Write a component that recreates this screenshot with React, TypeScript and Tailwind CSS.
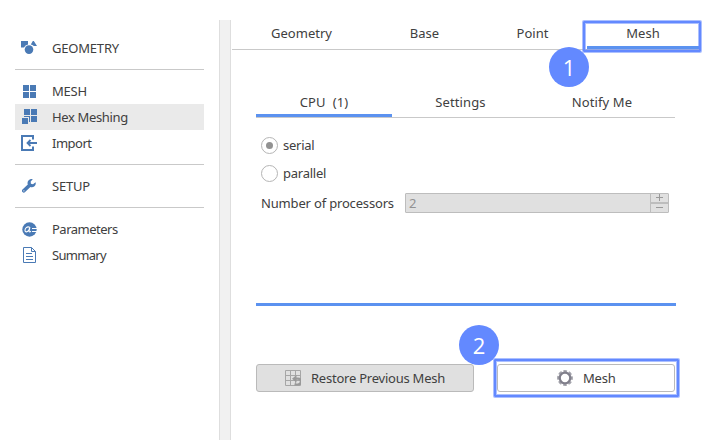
import React from "react";

const BLUE = "#4a7ab5";

function GeometryIcon() {
  return (
    <svg width="16" height="14" viewBox="0 0 16 14" fill={BLUE}>
      <path d="M0 0h7v3.500A5.200 5.200 0 0 0 3 6.500H0z" />
      <path d="M12.300-.8L16 5h-3.200A5.500 5.500 0 0 0 9.800 3.400z" />
      <circle cx="8" cy="8.600" r="4.300" />
    </svg>
  );
}

function MeshIcon() {
  return (
    <svg width="13" height="13" viewBox="0 0 13 13" fill={BLUE}>
      <path d="M0 0h6v6H0zM7 0h6v6H7zM0 7h6v6H0zM7 7h6v6H7z" />
    </svg>
  );
}

function HexIcon() {
  return (
    <svg width="16" height="16" viewBox="0 0 16 16" fill={BLUE}>
      <path d="M3 0h6v6H3zM10 0h6v6h-6zM10 7h6v6h-6zM1 9h6v6H1zM3 7h6v6H8V8H3z" />
    </svg>
  );
}

function ImportIcon() {
  return (
    <svg width="16" height="16" viewBox="0 0 16 16" fill="none" stroke={BLUE} strokeWidth="2">
      <path d="M12 4.500V1H1v14h11v-3.500" />
      <path d="M16 8H7" />
      <path d="M9.500 5L6.500 8L9.500 11" strokeWidth="1.800" />
    </svg>
  );
}

function WrenchIcon() {
  return (
    <svg width="14" height="14" viewBox="0 0 14 14">
      <path
        d="M10.800.2a4 4 0 0 0-5 5.200L.5 10.500a1.750 1.750 0 0 0 2.600 2.600l5.300-5a4 4 0 0 0 5.200-4.800L11 5.200 8.900 4.800 8.700 2.600z"
        fill={BLUE}
      />
      <circle cx="1.900" cy="11.800" r=".6" fill="#fff" />
    </svg>
  );
}

function ParametersIcon() {
  return (
    <svg width="15" height="15" viewBox="0 0 15 15">
      <circle cx="7.500" cy="7.500" r="7.200" fill={BLUE} />
      <path
        d="M7.700 5.200C4.800 4 3 6.500 3 8.300c0 2.300 2.700 2 4-.6l.9-2.500-.8 3.700c-.1 1.400.9 1.300 1.800.3"
        fill="none"
        stroke="#fff"
        strokeWidth="1.100"
      />
      <path d="M10 6.500h5M10 9.500h5" stroke="#fff" />
    </svg>
  );
}

function SummaryIcon() {
  return (
    <svg width="13" height="16" viewBox="0 0 13 16" fill="none" stroke={BLUE}>
      <path d="M.5.5h8l4 4v11H.5zM8.500.5v4h4M3 6.500h6M3 9.500h7M3 12.500h7" />
    </svg>
  );
}

function RestoreIcon() {
  return (
    <svg width="16" height="16" viewBox="0 0 16 16" fill="none">
      <path d="M.5.5h15v15H.5zM5.500 0v16M10.500 0v16M0 5.500h16M0 10.500h16" stroke="#a6a6a6" />
      <path d="M10.500 8.700H13a2.500 2.500 0 0 1 0 5.800h-3.500" stroke="#999" strokeWidth="2.200" />
      <path d="M11.500 5v7.500L7 8.700z" fill="#999" />
    </svg>
  );
}

function GearIcon() {
  return (
    <svg width="16" height="16" viewBox="0 0 16 16" fill="none">
      <circle cx="8" cy="8" r="6.900" stroke="#a3a3ab" strokeWidth="2" strokeDasharray="3.600 1.819" strokeDashoffset="1.800" />
      <circle cx="8" cy="8" r="5.300" stroke="#807f8b" strokeWidth="2.300" />
    </svg>
  );
}

function NavItem({
  icon,
  label,
  spacing,
  active = false,
}: {
  icon: React.ReactNode;
  label: string;
  spacing: string;
  active?: boolean;
}) {
  return (
    <div className={`flex h-[26px] items-center ${active ? "bg-[#eaeaea]" : ""}`}>
      <span className="flex w-[28px] justify-center">{icon}</span>
      <span className={`ml-[9px] ${spacing}`}>{label}</span>
    </div>
  );
}

function Divider() {
  return <div className="my-2 h-px bg-[#c9c9c9]" />;
}

function Tab({ label, width, active = false }: { label: string; width: string; active?: boolean }) {
  return (
    <div className={`flex flex-col ${width}`}>
      <span className="flex flex-1 items-center justify-center whitespace-pre">{label}</span>
      <span className={`h-[3px] ${active ? "bg-[#5b92f0]" : ""}`} />
    </div>
  );
}

function Step({ n, place }: { n: number; place: string }) {
  return (
    <div
      className={`absolute flex size-10 items-center justify-center rounded-full bg-[#6389ff] pb-px font-['Open_Sans','Noto_Sans',sans-serif] text-[22px] text-white ${place}`}
    >
      {n}
    </div>
  );
}

function Highlight({ place }: { place: string }) {
  return (
    <div
      className={`pointer-events-none absolute rounded-[1px] border-2 border-[#6389ff] shadow-[0_0_0_1px_#6389ff88,inset_0_0_0_1px_#6389ff88] ${place}`}
    />
  );
}

function Radio({ label, checked = false }: { label: string; checked?: boolean }) {
  return (
    <div className="flex h-7 items-center gap-[5px]">
      <span className="flex size-[17px] items-center justify-center rounded-full border border-[#b5b5b5]">
        {checked && <span className="size-[7px] rounded-full bg-[#929292]" />}
      </span>
      <span className="tracking-[-0.25px]">{label}</span>
    </div>
  );
}

export default function App() {
  return (
    <div className="relative flex h-[440px] w-[721px] overflow-hidden bg-white font-['Noto_Sans',sans-serif] text-[13px] leading-[18px] text-[#404040]">
      <nav className="ml-[15px] w-[189px] pt-[35px]">
        <NavItem icon={<GeometryIcon />} label="GEOMETRY" spacing="tracking-[-0.2px]" />
        <Divider />
        <NavItem icon={<MeshIcon />} label="MESH" spacing="tracking-[-0.2px]" />
        <NavItem icon={<HexIcon />} label="Hex Meshing" spacing="tracking-[-0.36px]" active />
        <NavItem icon={<ImportIcon />} label="Import" spacing="tracking-[-0.5px]" />
        <Divider />
        <NavItem icon={<WrenchIcon />} label="SETUP" spacing="tracking-[-0.2px]" />
        <Divider />
        <NavItem icon={<ParametersIcon />} label="Parameters" spacing="tracking-[-0.5px]" />
        <NavItem icon={<SummaryIcon />} label="Summary" spacing="tracking-[-0.7px]" />
      </nav>

      <div className="mt-5 ml-[15px] w-3 border-x border-[#dedede] bg-[#f1f1f1]" />

      <main className="ml-px w-[472px] pt-5">
        <div className="flex h-[30px] w-[469px] border-b border-[#c9c9c9]">
          <Tab label="Geometry" width="w-[139px]" />
          <Tab label="Base" width="w-[107px]" />
          <Tab label="Point" width="w-[109px]" />
          <Tab label="Mesh" width="w-[112px]" active />
        </div>

        <section className="mt-[39px] ml-6 h-[217px] w-[420px] border-b-[3px] border-[#5b92f0]">
          <div className="flex h-[29px] w-[419px] border-b border-[#c9c9c9] tracking-[0.1px]">
            <Tab label="CPU  (1)" width="w-[136px]" active />
            <Tab label="Settings" width="w-[137px]" />
            <Tab label="Notify Me" width="w-[146px]" />
          </div>
          <div className="mt-[13px] pl-[5px]">
            <Radio label="serial" checked />
            <Radio label="parallel" />
            <div className="mt-[6px] flex h-5 items-center">
              <span className="w-[144px] tracking-[-0.17px] whitespace-nowrap">Number of processors</span>
              <div className="flex h-5 w-[264px] rounded-[1px] border border-[#bdbdbd] bg-[#e0e0e0]">
                <span className="flex flex-1 items-center pl-[3px] text-[#929292]">2</span>
                <span className="flex w-[18px] flex-col border-l border-[#bdbdbd]">
                  <svg className="h-2 w-[17px]" viewBox="0 0 17 8" stroke="#999">
                    <path d="M5 3.500h7M8.500 0v7" />
                  </svg>
                  <span className="h-0.5 bg-[#bdbdbd]" />
                  <svg className="h-2 w-[17px]" viewBox="0 0 17 8" stroke="#999">
                    <path d="M5 3.500h7" />
                  </svg>
                </span>
              </div>
            </div>
          </div>
        </section>

        <div className="mt-[58px] ml-6 flex gap-[23px]">
          <button className="flex h-7 w-[218px] items-center rounded-[3px] border border-[#bababa] bg-[#e0e0e0] pl-7">
            <RestoreIcon />
            <span className="ml-[10px] tracking-[-0.23px] whitespace-nowrap">Restore Previous Mesh</span>
          </button>
          <button className="flex h-7 w-[178px] items-center rounded-[3px] border border-[#bababa] bg-white pl-[59px]">
            <GearIcon />
            <span className="ml-[10px] tracking-[-0.2px]">Mesh</span>
          </button>
        </div>
      </main>

      <Highlight place="left-[583px] top-[21px] h-[31px] w-[118px]" />
      <Highlight place="left-[494px] top-[359px] h-[38px] w-[185px]" />
      <Step n={1} place="left-[549px] top-[47px]" />
      <Step n={2} place="left-[459px] top-[325px]" />
    </div>
  );
}
